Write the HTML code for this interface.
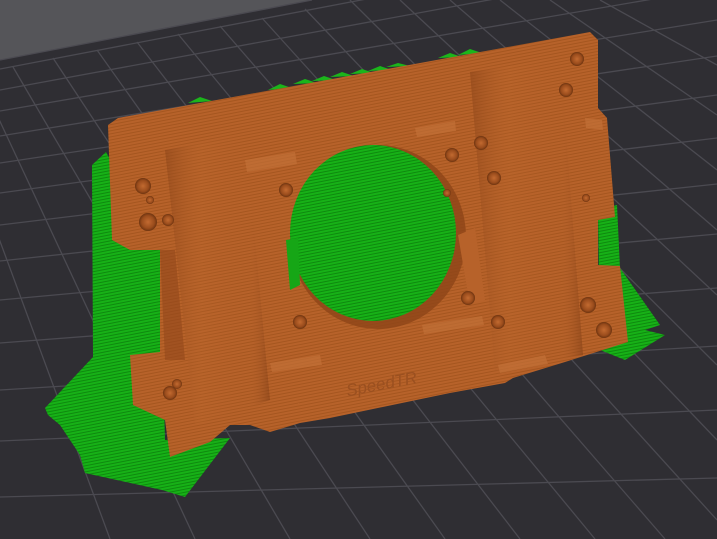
<!DOCTYPE html>
<html><head><meta charset="utf-8"><style>html,body{margin:0;padding:0;background:#2f2e33}svg{display:block}</style></head>
<body>
<svg width="717" height="539" viewBox="0 0 717 539" xmlns="http://www.w3.org/2000/svg">
<defs>
<pattern id="lines" width="4" height="3" patternUnits="userSpaceOnUse" patternTransform="rotate(-11)">
<rect width="4" height="3" fill="#b7622a"/><rect y="2" width="4" height="1" fill="#a5561f"/>
</pattern>
<pattern id="gl" width="3" height="3" patternUnits="userSpaceOnUse" patternTransform="rotate(-11)">
<rect width="3" height="3" fill="#17b117"/><rect y="2" width="3" height="1" fill="#0e8a0e"/>
</pattern>
<linearGradient id="cylL" x1="0" x2="1">
<stop offset="0" stop-color="#8a4318" stop-opacity=".55"/><stop offset=".35" stop-color="#c06a2e" stop-opacity=".2"/><stop offset=".8" stop-color="#b5602a" stop-opacity="0"/><stop offset="1" stop-color="#7a3a14" stop-opacity=".5"/>
</linearGradient>
<radialGradient id="hole"><stop offset="0" stop-color="#c26a30"/><stop offset=".7" stop-color="#9a4c1c"/><stop offset="1" stop-color="#6e3410"/></radialGradient>
</defs>
<rect width="717" height="539" fill="#2f2e33"/>
<polygon points="0,0 312,0 0,60" fill="#555559"/>
<g stroke="#4b4a51" stroke-width="1.3" fill="none">
<line x1="0" y1="60" x2="312" y2="0"/>
<line x1="0" y1="69" x2="717" y2="-68"/>
<line x1="0" y1="90" x2="717" y2="-42"/>
<line x1="0" y1="111" x2="717" y2="-12"/>
<line x1="0" y1="136" x2="717" y2="20"/>
<line x1="0" y1="163" x2="717" y2="56"/>
<line x1="0" y1="193" x2="717" y2="95"/>
<line x1="0" y1="225" x2="717" y2="138"/>
<line x1="0" y1="261" x2="717" y2="184"/>
<line x1="0" y1="300" x2="717" y2="234"/>
<line x1="0" y1="343" x2="717" y2="288"/>
<line x1="0" y1="390" x2="717" y2="346"/>
<line x1="0" y1="441" x2="717" y2="410"/>
<line x1="0" y1="497" x2="717" y2="478"/>
<line x1="0" y1="558" x2="717" y2="552"/>
<line x1="13" y1="67" x2="290" y2="539"/>
<line x1="53" y1="58" x2="370" y2="539"/>
<line x1="97" y1="50" x2="445" y2="539"/>
<line x1="137" y1="42" x2="520" y2="539"/>
<line x1="178" y1="34" x2="595" y2="539"/>
<line x1="220" y1="26" x2="665" y2="539"/>
<line x1="262" y1="18" x2="717" y2="520"/>
<line x1="305" y1="9" x2="717" y2="440"/>
<line x1="350" y1="0" x2="717" y2="365"/>
<line x1="400" y1="0" x2="717" y2="295"/>
<line x1="450" y1="0" x2="717" y2="230"/>
<line x1="500" y1="0" x2="717" y2="170"/>
<line x1="550" y1="0" x2="717" y2="115"/>
<line x1="600" y1="0" x2="717" y2="65"/>
<line x1="-10" y1="100" x2="195" y2="539"/>
<line x1="-30" y1="160" x2="110" y2="539"/>
</g>
<polygon points="45,408 93,357 92,165 106,152 160,250 165,440 230,438 185,497 162,490 85,473 80,455 70,440 60,425 48,415" fill="url(#gl)"/>
<polygon points="598,210 617,205 620,268 660,325 645,330 665,335 625,360 600,350" fill="url(#gl)"/>
<g fill="#1bb51b">
<polygon points="188,103 200,97 212,101"/><polygon points="268,90 280,84 292,88"/><polygon points="293,84 305,79 317,83"/>
<polygon points="312,81 324,76 336,80"/><polygon points="330,77 342,72 354,76"/><polygon points="350,74 362,69 374,73"/>
<polygon points="368,71 380,66 392,70"/><polygon points="386,67 398,63 410,66"/><polygon points="438,58 450,53 462,57"/>
<polygon points="458,55 470,49 482,53"/>
</g>
<polygon fill="url(#lines)" points="108,125 118,118 590,32 598,40 598,108 607,118 615,217 598,220 598,265 620,266 628,342 565,362 513,378 505,383 450,393 330,418 300,423 270,432 250,425 230,425 210,442 170,457 165,420 133,405 130,355 160,352 160,250 130,250 112,240"/>
<polygon fill="url(#cylL)" points="165,150 245,135 270,400 195,425"/>
<polygon fill="url(#cylL)" points="470,72 560,58 583,355 495,372"/>
<polygon fill="#8f4619" opacity=".55" points="160,250 175,250 185,360 165,360"/>
<ellipse cx="378" cy="237" rx="88" ry="92" fill="#8d4518" opacity=".8"/>
<ellipse cx="373" cy="233" rx="83" ry="88" fill="url(#gl)"/>
<polygon points="286,240 298,238 300,285 290,290" fill="#16a616"/>
<polygon points="458,235 475,228 485,300 470,305" fill="#b7622a"/>
<g fill="url(#hole)">
<circle cx="143" cy="186" r="8"/><circle cx="150" cy="200" r="4"/><circle cx="148" cy="222" r="9"/>
<circle cx="286" cy="190" r="7"/><circle cx="300" cy="322" r="7"/><circle cx="452" cy="155" r="7"/>
<circle cx="447" cy="193" r="4"/><circle cx="468" cy="298" r="7"/><circle cx="577" cy="59" r="7"/>
<circle cx="566" cy="90" r="7"/><circle cx="481" cy="143" r="7"/><circle cx="494" cy="178" r="7"/>
<circle cx="586" cy="198" r="4"/><circle cx="588" cy="305" r="8"/><circle cx="604" cy="330" r="8"/>
<circle cx="498" cy="322" r="7"/><circle cx="177" cy="384" r="5"/><circle cx="170" cy="393" r="7"/>
<circle cx="168" cy="220" r="6"/>
</g>
<g fill="#c4733a" opacity=".6">
<polygon points="270,363 320,355 322,365 272,372"/><polygon points="422,325 482,316 484,325 424,334"/>
<polygon points="498,365 545,355 548,364 500,373"/><polygon points="245,160 295,152 297,164 247,172"/>
<polygon points="415,128 455,121 456,131 417,137"/><polygon points="585,118 602,120 603,130 586,128"/>
</g>
<text x="345" y="388" font-family="Liberation Sans, sans-serif" font-size="17" font-style="italic" fill="#9b5020" transform="rotate(-11 390 380)">SpeedTR</text>
</svg>
</body></html>
